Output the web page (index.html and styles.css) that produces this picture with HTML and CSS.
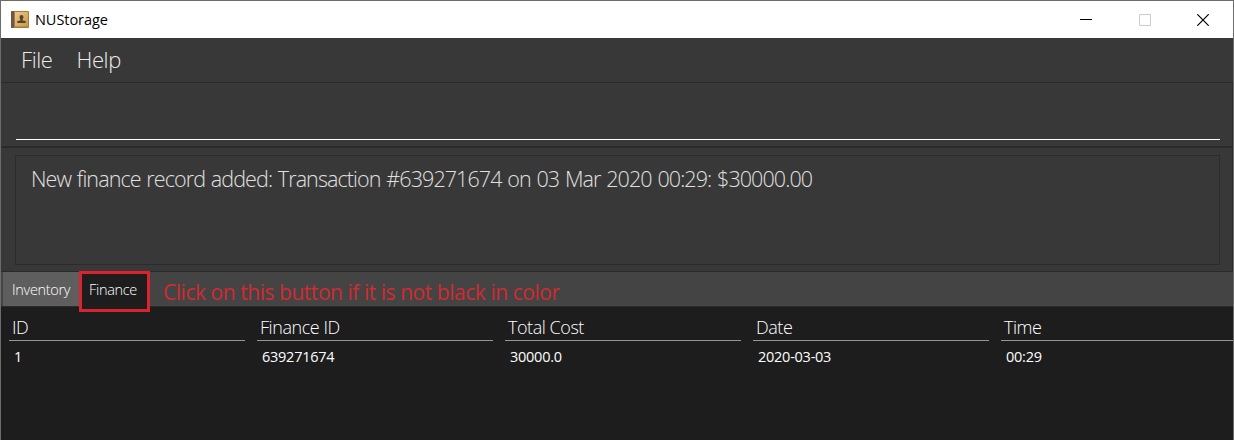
FILE: index.html
```html
<!DOCTYPE html>
<html lang="en">
<head>
<meta charset="utf-8">
<title>NUStorage</title>
<link rel="stylesheet" href="styles.css">
</head>
<body>
<div class="window">
  <header class="titlebar">
    <svg class="app-icon" width="18" height="17" viewBox="0 0 18 17">
      <defs><linearGradient id="cover" x1="0" y1="0" x2="1" y2="1"><stop offset="0" stop-color="#efca86"/><stop offset="1" stop-color="#c8974d"/></linearGradient></defs>
      <rect width="18" height="17" rx="1" fill="#a47a43"/>
      <rect width="3" height="17" rx="1" fill="#6b5847"/>
      <rect x="4" y="1" width="13" height="14.500" fill="url(#cover)"/>
      <path d="M10.500 4a2 2 0 0 1 2 2c0 1-.9 1.700-.9 3.400l3.100.6V12H6.300V10l3.100-.6c0-1.700-.9-2.400-.9-3.400a2 2 0 0 1 2-2z" fill="#56432c"/>
    </svg>
    <h1 class="title">NUStorage</h1>
    <div class="controls">
      <svg width="12" height="12" viewBox="0 0 12 12"><path d="M0 5.500h12" stroke="#000"/></svg>
      <svg width="12" height="12" viewBox="0 0 12 12"><path d="M.5.500h11v11H.5z" fill="none" stroke="#ccc"/></svg>
      <svg width="12" height="12" viewBox="0 0 12 12"><path d="M.3.300l11.400 11.400M11.700.300L.3 11.700" stroke="#000" stroke-width="1.200"/></svg>
    </div>
  </header>
  <nav class="menubar"><span class="menu">File</span><span class="menu">Help</span></nav>
  <section class="command"><div class="command-field"></div></section>
  <section class="result"><div class="result-box"><span class="message">New finance record added: Transaction #639271674 on 03 Mar 2020 00:29: $30000.00</span></div></section>
  <div class="tabs">
    <div class="tab"><span>Inventory</span></div>
    <div class="tab selected"><span>Finance</span></div>
    <p class="hint">Click on this button if it is not black in color</p>
  </div>
  <main class="table">
    <div class="column"><div class="head"><span>ID</span></div><div class="cell"><span>1</span></div></div>
    <div class="column"><div class="head"><span>Finance ID</span></div><div class="cell"><span>639271674</span></div></div>
    <div class="column"><div class="head"><span>Total Cost</span></div><div class="cell"><span>30000.0</span></div></div>
    <div class="column"><div class="head"><span>Date</span></div><div class="cell"><span>2020-03-03</span></div></div>
    <div class="column"><div class="head"><span>Time</span></div><div class="cell"><span>00:29</span></div></div>
  </main>
</div>
</body>
</html>
```
FILE: styles.css
```css
* { box-sizing: border-box; }
body { margin: 0; background: #1d1d1d; font-family: "Open Sans", "Noto Sans", sans-serif; }
.window { display: flex; flex-direction: column; width: 1234px; height: 440px; overflow: hidden; border: 1px solid #6c6c6c; border-bottom: 0; background: #383838; }
.titlebar { display: flex; align-items: center; flex: 0 0 37px; padding: 0 24px 0 10px; background: #fff; }
.title { margin: 0 0 0 6px; font-size: 14.5px; font-weight: 400; letter-spacing: -.05px; color: #000; }
.controls { display: flex; gap: 47px; margin-left: auto; }
.controls svg:last-child { margin-left: -1px; }
.menubar { display: flex; flex: 0 0 44px; gap: 24px; padding-left: 20px; line-height: 43px; }
.menu { font-size: 22px; font-weight: 300; color: #ececec; letter-spacing: -.4px; }
.command { flex: 0 0 64px; padding: 0 12px 6px 15px; border-top: 1px solid #2a2a2a; border-right: 1px solid #2c2c2c; }
.command-field { height: 57px; border-bottom: 1px solid #fff; }
.result { flex: 0 0 126px; padding: 7px 12px 6px 14px; border: solid #2a2a2a; border-width: 2px 1px 1px 0; }
.result-box { height: 110px; padding: 8px 0 0 15px; border: 1px solid #2b2b2b; line-height: 30px; }
.message { display: block; white-space: nowrap; font-size: 21.5px; font-weight: 300; color: #e0e0e0; letter-spacing: -.9px; word-spacing: 1px; }
.tabs { display: flex; flex: 0 0 35px; height: 35px; padding-left: 2px; background: #444; border-bottom: 1px solid #2b2b2b; }
.tab { flex: 0 0 76px; height: 34px; padding-left: 9px; background: #5e5e5e; color: #fff; font-size: 14.5px; font-weight: 300; line-height: 36px; letter-spacing: -.33px; }
.tab.selected { flex-basis: 71px; height: 41px; margin-top: -1px; padding-left: 7px; background: #1d1d1d; border: 3px solid #d9232e; line-height: 31px; z-index: 1; }
.hint { margin: 0 0 0 13px; font-size: 21px; line-height: 41px; letter-spacing: -.46px; color: #d22a32; white-space: nowrap; }
.table { display: flex; flex: 1; padding-left: 2px; background: #1d1d1d; }
.column { flex: 0 0 248px; padding-left: 6px; }
.head { width: 236px; height: 34px; padding-left: 3px; border-bottom: 1px solid #969696; color: #fff; font-size: 18px; font-weight: 300; line-height: 40px; letter-spacing: -.45px; }
.cell { padding-left: 5px; color: #fff; font-size: 14.5px; line-height: 32px; letter-spacing: -.25px; }
```
